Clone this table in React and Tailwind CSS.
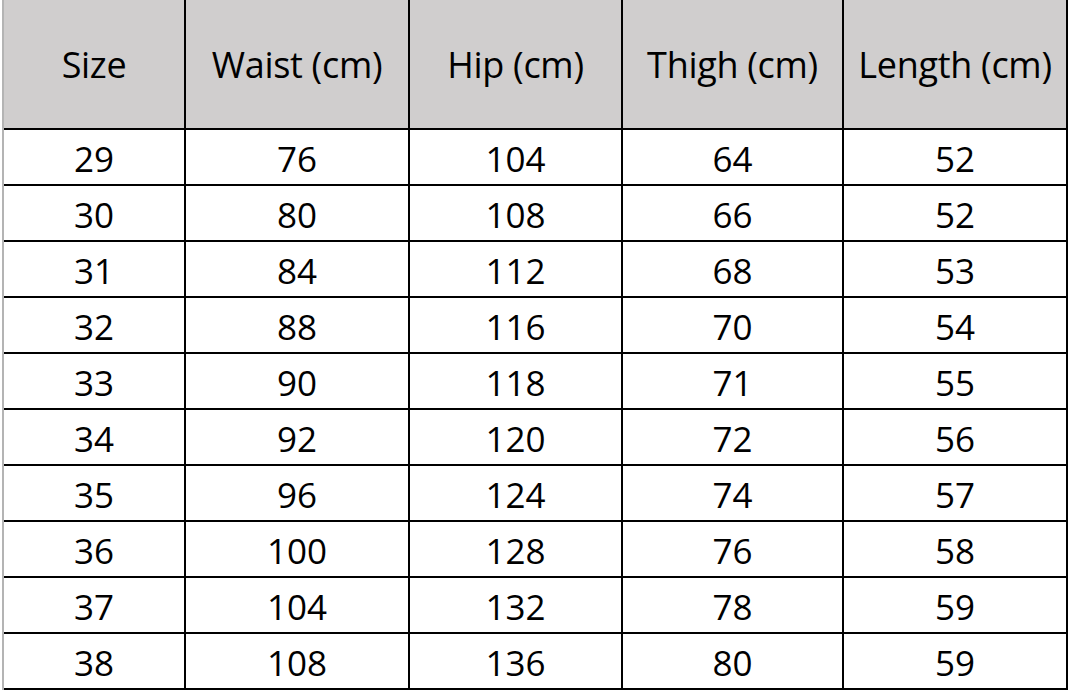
import React from 'react';

const headers = ['Size', 'Waist (cm)', 'Hip (cm)', 'Thigh (cm)', 'Length (cm)'];

const rows = [
  [29, 76, 104, 64, 52],
  [30, 80, 108, 66, 52],
  [31, 84, 112, 68, 53],
  [32, 88, 116, 70, 54],
  [33, 90, 118, 71, 55],
  [34, 92, 120, 72, 56],
  [35, 96, 124, 74, 57],
  [36, 100, 128, 76, 58],
  [37, 104, 132, 78, 59],
  [38, 108, 136, 80, 59],
];

export default function App() {
  return (
    <div
      className="w-[1068px] h-[691px] bg-white pl-[2px] overflow-hidden"
      style={{ fontFamily: '"Open Sans", "Noto Sans", sans-serif' }}
    >
      <div className="w-[1066px] border-l-2 border-[#b4b4b4]">
        {/* size chart */}
        <div className="grid grid-cols-[180px_222px_211px_219px_222px] grid-rows-[128px_repeat(10,54px)] gap-[2px] bg-black border-r-2 border-b-2 border-black text-black">
          {headers.map((h) => (
            <div key={h} className="bg-[#d0cece] flex items-center justify-center text-[36px] tracking-[-0.3px] pt-[2px] whitespace-nowrap">
              {h}
            </div>
          ))}
          {rows.map((r, i) =>
            r.map((v, j) => (
              <div key={i + '-' + j} className="bg-white flex items-center justify-center text-[35px] pt-[4px]">
                {v}
              </div>
            ))
          )}
        </div>
      </div>
    </div>
  );
}
